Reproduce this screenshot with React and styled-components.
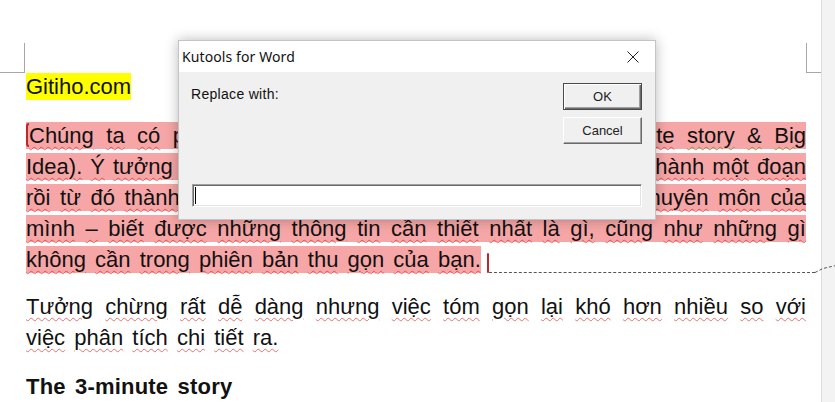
import React from "react";
import styled, { createGlobalStyle } from "styled-components";

const GlobalStyle = createGlobalStyle`
  html, body { margin: 0; padding: 0; background: #ffffff; }
  * { box-sizing: border-box; }
`;

const Screen = styled.div`
  position: relative;
  display: flex;
  width: 835px;
  height: 402px;
  overflow: hidden;
  background: #ffffff;
`;

const Page = styled.div`
  width: 821px;
  display: flex;
  flex-direction: column;
  background: #ffffff;
`;

const Gutter = styled.div`
  flex: 1;
  background: #f3f3f3;
  border-left: 1px solid #dcdcdc;
`;

const MarkRow = styled.div`
  display: flex;
  justify-content: space-between;
  align-items: flex-end;
  height: 73px;
`;

const CropMark = styled.div`
  width: ${(p) => (p.$side === "left" ? "25px" : "15px")};
  height: 30px;
  border-bottom: 1px solid #a6a6a6;
  ${(p) =>
    p.$side === "left"
      ? "border-right: 1px solid #a6a6a6;"
      : "border-left: 1px solid #a6a6a6;"}
`;

const Content = styled.div`
  padding: 0 15px 0 26px;
  font-family: "Liberation Sans", Arial, sans-serif;
  font-size: 22px;
  color: #111;
`;

const Para = styled.div`
  display: flex;
  flex-direction: column;
  align-items: flex-start;
  margin-bottom: ${(p) => p.$after || 21}px;
`;

const Line = styled.div`
  position: relative;
  display: flex;
  align-items: stretch;
  width: 100%;
  height: 27px;
  line-height: 27px;
  margin-bottom: 4px;
  &:last-child { margin-bottom: 0; }
`;

const LineText = styled.div`
  flex: ${(p) => (p.$last ? "0 0 auto" : "1")};
  white-space: nowrap;
  word-spacing: ${(p) => (p.$last ? "3px" : "0")};
  text-align: ${(p) => (p.$last ? "left" : "justify")};
  text-align-last: ${(p) => (p.$last ? "left" : "justify")};
  background: ${(p) => p.$mark || "transparent"};
`;

const Word = styled.span`
  text-decoration-line: underline;
  text-decoration-style: wavy;
  text-decoration-thickness: 1px;
  text-underline-offset: 3px;
  text-decoration-color: ${(p) =>
    p.$tone === "grammar" ? "rgba(140,130,40,0.8)" : "rgba(220,30,30,0.6)"};
`;

const Highlight = styled.span`
  display: inline-block;
  height: 27px;
  line-height: 27px;
  background: #ffff00;
`;

const StartBracket = styled.span`
  display: inline-block;
  width: 3px;
  height: 24px;
  vertical-align: -4px;
  border: 2px solid #c0262b;
  border-right: none;
  border-radius: 3px 0 0 3px;
`;

const EndBracket = styled.span`
  align-self: flex-end;
  width: 2px;
  height: 20px;
  margin-left: 6px;
  background: #c0262b;
  border-radius: 1px;
`;

const Leader = styled.span`
  position: relative;
  flex: 1;
  align-self: flex-end;
  margin-right: -9px;
  border-bottom: 1px dashed #555;
`;

const LeaderTail = styled.svg`
  position: absolute;
  right: -21px;
  bottom: -1px;
  width: 21px;
  height: 9px;
  overflow: visible;
`;

const Heading = styled.div`
  font-weight: bold;
  font-size: 22px;
  letter-spacing: 0.2px;
  word-spacing: 3px;
  line-height: 27px;
  color: #111;
`;

/* Dialog */
const Dialog = styled.div`
  position: absolute;
  left: 178px;
  top: 40px;
  width: 478px;
  height: 180px;
  display: flex;
  flex-direction: column;
  background: #f0f0f0;
  border: 1px solid rgba(0, 0, 0, 0.18);
  box-shadow: 0 0 12px rgba(0, 0, 0, 0.28);
`;

const TitleBar = styled.div`
  display: flex;
  align-items: center;
  justify-content: space-between;
  height: 31px;
  background: #ffffff;
  padding-left: 3px;
`;

const Title = styled.span`
  font-family: "Noto Sans", "Open Sans", sans-serif;
  font-size: 14px;
  color: #111;
  letter-spacing: 0.1px;
`;

const CloseButton = styled.div`
  display: flex;
  align-items: center;
  justify-content: center;
  width: 44px;
  height: 31px;
`;

const DialogBody = styled.div`
  flex: 1;
  display: flex;
  flex-direction: column;
  padding: 11px 13px 12px 12px;
`;

const TopRow = styled.div`
  display: flex;
  justify-content: space-between;
  align-items: flex-start;
`;

const Label = styled.span`
  font-family: "Liberation Sans", Arial, sans-serif;
  font-size: 14px;
  letter-spacing: 0.3px;
  line-height: 16px;
  padding-top: 3px;
  color: #111;
`;

const ButtonStack = styled.div`
  display: flex;
  flex-direction: column;
  gap: 7px;
`;

const Button = styled.div`
  width: 79px;
  height: 27px;
  display: flex;
  align-items: center;
  justify-content: center;
  font-family: "Liberation Sans", Arial, sans-serif;
  font-size: 13px;
  color: #222;
  background: #f0f0f0;
  border-style: solid;
  border-width: 1px;
  border-color: ${(p) =>
    p.$default ? "#4a4a4a" : "#ffffff #6b6b6b #6b6b6b #ffffff"};
  box-shadow: ${(p) =>
    p.$default
      ? "inset 1px 1px #ffffff, inset -1px -1px #6b6b6b, inset -2px -2px #a0a0a0"
      : "inset -1px -1px #a0a0a0"};
`;

const Spacer = styled.div`
  flex: 1;
`;

const TextBox = styled.div`
  height: 23px;
  margin-left: 1px;
  display: flex;
  align-items: center;
  padding-left: 2px;
  background: #ffffff;
  border-style: solid;
  border-width: 1px;
  border-color: #a0a0a0 #ffffff #ffffff #a0a0a0;
  box-shadow: inset 1px 1px #696969, inset -1px -1px #e3e3e3;
`;

const Caret = styled.span`
  width: 1px;
  height: 17px;
  background: #000;
`;

function Spell({ text, tone }) {
  const words = text.split(" ");
  return words.map((w, i) => (
    <React.Fragment key={i}>
      {i > 0 ? " " : null}
      <Word $tone={tone}>{w}</Word>
    </React.Fragment>
  ));
}

const PINK = "#f6a6a6";

export default function App() {
  return (
    <>
      <GlobalStyle />
      <Screen>
        <Page>
          <MarkRow>
            <CropMark $side="left" />
            <CropMark $side="right" />
          </MarkRow>
          <Content>
            <Para $after={22}>
              <Highlight>Gitiho.com</Highlight>
            </Para>
            <Para $after={20}>
              <Line>
                <LineText $mark={PINK}>
                  <StartBracket />
                  <Spell text="Chúng ta có phương pháp tóm tắt có tên gọi (The 3-minute" />{" "}
                  <Spell text="story & Big" tone="grammar" />
                </LineText>
              </Line>
              <Line>
                <LineText $mark={PINK}>
                  <Spell text="Idea). Ý tưởng của nó là hãy thu gọn lại câu chuyện của bạn thành một đoạn" />
                </LineText>
              </Line>
              <Line>
                <LineText $mark={PINK}>
                  <Spell text="rồi từ đó thành một câu. Bạn phải hiểu thật rõ về lĩnh vực chuyên môn của" />
                </LineText>
              </Line>
              <Line>
                <LineText $mark={PINK}>
                  <Spell text="mình – biết được những thông tin cần thiết nhất là gì, cũng như những gì" />
                </LineText>
              </Line>
              <Line>
                <LineText $last $mark={PINK}>
                  <Spell text="không cần trong phiên bản thu gọn của bạn." />
                </LineText>
                <EndBracket />
                <Leader>
                  <LeaderTail viewBox="0 0 21 9">
                    <path
                      d="M0 8.5 L8 4.5 L21 1.5"
                      fill="none"
                      stroke="#555"
                      strokeWidth="1"
                      strokeDasharray="3 2"
                    />
                  </LeaderTail>
                </Leader>
              </Line>
            </Para>
            <Para $after={22}>
              <Line>
                <LineText>
                  <Spell text="Tưởng chừng rất dễ dàng nhưng việc tóm gọn lại khó hơn nhiều so với" />
                </LineText>
              </Line>
              <Line>
                <LineText $last>
                  <Spell text="việc phân tích chi tiết ra." />
                </LineText>
              </Line>
            </Para>
            <Heading>The 3-minute story</Heading>
          </Content>
        </Page>
        <Gutter />
        <Dialog>
          <TitleBar>
            <Title>Kutools for Word</Title>
            <CloseButton>
              <svg width="12" height="12" viewBox="0 0 12 12">
                <path d="M0.5 0.5 L11.5 11.5 M11.5 0.5 L0.5 11.5" stroke="#222" strokeWidth="1" fill="none" />
              </svg>
            </CloseButton>
          </TitleBar>
          <DialogBody>
            <TopRow>
              <Label>Replace with:</Label>
              <ButtonStack>
                <Button $default>OK</Button>
                <Button>Cancel</Button>
              </ButtonStack>
            </TopRow>
            <Spacer />
            <TextBox>
              <Caret />
            </TextBox>
          </DialogBody>
        </Dialog>
      </Screen>
    </>
  );
}
